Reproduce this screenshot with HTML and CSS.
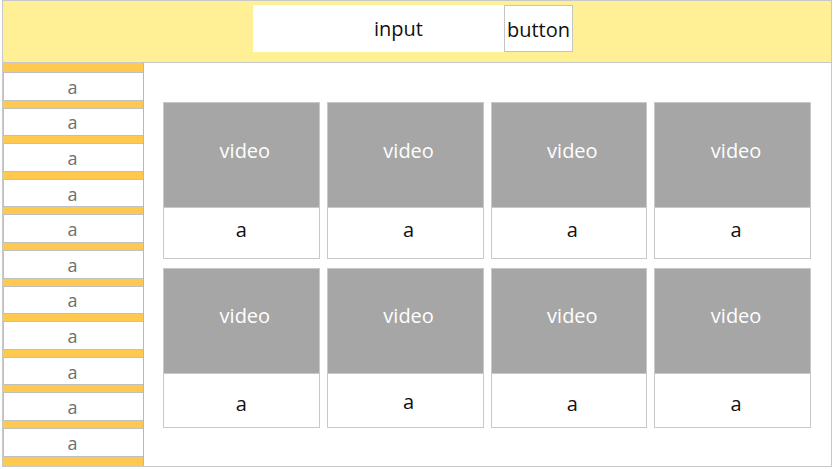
FILE: index.html
```html
<!DOCTYPE html>
<html>
<head>
<meta charset="utf-8">
<link rel="stylesheet" href="styles.css">
</head>
<body>
<div class="app">
  <header class="top">
    <div class="search">
      <div class="input">input</div>
      <div class="button">button</div>
    </div>
  </header>
  <div class="body">
    <nav class="side">
      <div class="item">a</div>
      <div class="item">a</div>
      <div class="item">a</div>
      <div class="item">a</div>
      <div class="item">a</div>
      <div class="item">a</div>
      <div class="item">a</div>
      <div class="item">a</div>
      <div class="item">a</div>
      <div class="item">a</div>
      <div class="item">a</div>
    </nav>
    <main class="main">
      <div class="grid">
        <div class="card"><div class="video">video</div><div class="cap">a</div></div>
        <div class="card"><div class="video">video</div><div class="cap">a</div></div>
        <div class="card"><div class="video">video</div><div class="cap">a</div></div>
        <div class="card"><div class="video">video</div><div class="cap">a</div></div>
        <div class="card low"><div class="video">video</div><div class="cap">a</div></div>
        <div class="card low"><div class="video">video</div><div class="cap up">a</div></div>
        <div class="card low"><div class="video">video</div><div class="cap">a</div></div>
        <div class="card low"><div class="video">video</div><div class="cap">a</div></div>
      </div>
    </main>
  </div>
</div>
</body>
</html>
```
FILE: styles.css
```css
* { box-sizing: border-box; }
html, body { margin: 0; padding: 0; background: #fff; }
body { font-family: "Open Sans", "Noto Sans", sans-serif; }
.app {
  margin-left: 2px;
  width: 830px;
  height: 467px;
  border: 1px solid #c8c8c8;
  display: flex;
  flex-direction: column;
}
.top {
  height: 62px;
  flex: none;
  background: #fff096;
  border-bottom: 1px solid #c8c8c8;
  display: flex;
  justify-content: center;
  align-items: flex-start;
  padding: 4px 8px 0 0;
}
.search { display: flex; height: 47px; }
.input {
  width: 251px;
  background: #fff;
  display: flex;
  align-items: center;
  justify-content: center;
  font-size: 20px;
  color: #111;
  padding: 0 0 1px 40px;
}
.button {
  width: 69px;
  background: #fff;
  border: 1px solid #c4c4c4;
  display: flex;
  align-items: center;
  justify-content: center;
  font-size: 20px;
  color: #111;
  padding-top: 1px;
}
.body { flex: 1; display: flex; min-height: 0; }
.side {
  width: 141px;
  flex: none;
  background: #ffc84f;
  border-right: 1px solid #b8b8b8;
  display: flex;
  flex-direction: column;
  gap: 7px;
  padding-top: 9px;
}
.item {
  height: 28.6px;
  background: #fff;
  border: 1px solid #c0c0c0;
  border-right: none;
  display: flex;
  align-items: center;
  justify-content: center;
  font-size: 18px;
  color: #707070;
  padding: 1px 2px 0 0;
}
.main {
  flex: 1;
  padding: 39px 20px 0 19px;
}
.grid {
  display: grid;
  grid-template-columns: repeat(4, 1fr);
  grid-template-rows: 157px 160px;
  column-gap: 7px;
  row-gap: 9px;
}
.card {
  border: 1px solid #c8c8c8;
  display: flex;
  flex-direction: column;
}
.video {
  height: 105px;
  flex: none;
  background: #a6a6a6;
  border-bottom: 1px solid #c8c8c8;
  color: #fff;
  font-size: 20px;
  display: flex;
  align-items: center;
  justify-content: center;
  padding: 0 0 10px 7px;
}
.cap {
  flex: 1;
  display: flex;
  align-items: center;
  justify-content: center;
  font-size: 20px;
  color: #111;
  padding: 0 0 8px 7px;
}
.card:nth-child(4n+1) .cap { padding-left: 0; }
.low .video { padding-bottom: 11px; }
.low .cap { padding-bottom: 0; padding-top: 6px; }
.low .cap.up { padding-top: 2px; }
```
